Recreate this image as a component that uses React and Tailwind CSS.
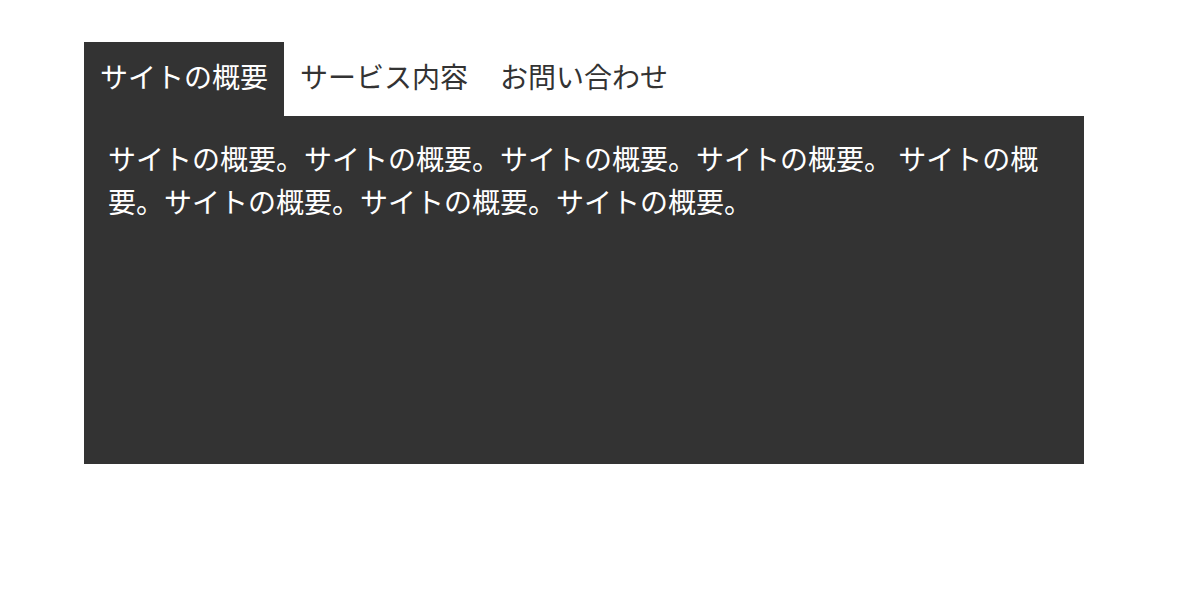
export default function App() {
  const tabs = ["サイトの概要", "サービス内容", "お問い合わせ"];
  return (
    <div
      className="w-[1186px] h-[596px] bg-white pt-[42px] pl-[84px]"
      style={{ fontFamily: '"Noto Sans CJK JP", "Noto Sans", sans-serif' }}
    >
      <div className="w-[1000px]">
        <div className="flex">
          {tabs.map((t, i) => (
            <div
              key={t}
              className={
                i === 0
                  ? "w-[200px] px-4 pt-[13px] pb-[19px] text-[28px] leading-[42px] bg-[#333333] text-white"
                  : "w-[200px] px-4 pt-[13px] pb-[19px] text-[28px] leading-[42px] text-[#333333]"
              }
            >
              {t}
            </div>
          ))}
        </div>
        <div className="h-[348px] bg-[#333333] px-6 pt-[21px] text-white text-[28px] leading-[43px]">
          サイトの概要。サイトの概要。サイトの概要。サイトの概要。 サイトの概要。サイトの概要。サイトの概要。サイトの概要。
        </div>
      </div>
    </div>
  );
}
